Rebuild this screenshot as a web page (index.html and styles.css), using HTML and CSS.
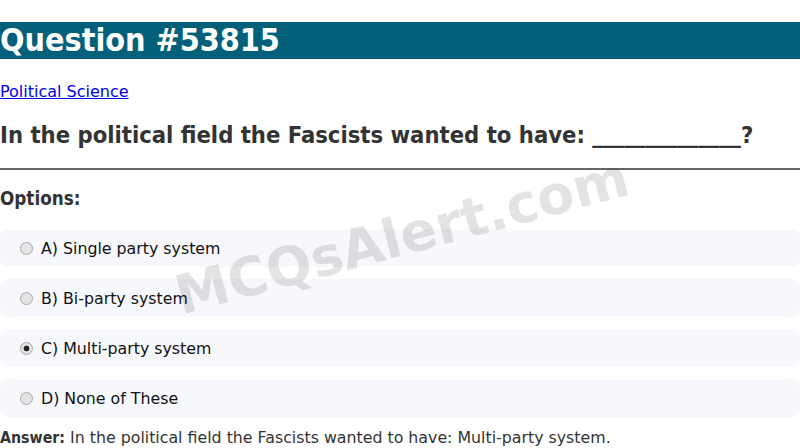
FILE: index.html
```
<!DOCTYPE html>
<html lang="en">
<head>
<meta charset="utf-8">
<title>Question #53815</title>
<link rel="stylesheet" href="styles.css">
</head>
<body>
<div class="page">
  <h1 class="title">Question #53815</h1>
  <p class="cat"><a href="#">Political Science</a></p>
  <h2 class="question">In the political field the Fascists wanted to have: ______________?</h2>
  <hr class="rule">
  <h3 class="opts-head">Options:</h3>
  <div class="options">
    <label class="option"><input type="radio" name="q" disabled><span>A) Single party system</span></label>
    <label class="option"><input type="radio" name="q" disabled><span>B) Bi-party system</span></label>
    <label class="option"><input type="radio" name="q" disabled checked><span>C) Multi-party system</span></label>
    <label class="option"><input type="radio" name="q" disabled><span>D) None of These</span></label>
  </div>
  <p class="answer"><strong>Answer:</strong> In the political field the Fascists wanted to have: Multi-party system.</p>
  <div class="watermark">MCQsAlert.com</div>
</div>
</body>
</html>
```
FILE: styles.css
```
html, body {
  margin: 0;
  padding: 0;
  background: #fff;
}
body {
  font-family: "DejaVu Sans", Verdana, sans-serif;
  color: #000;
}
.page {
  position: relative;
  overflow: hidden;
  height: 448px;
}
.title {
  font-family: "DejaVu Sans Condensed", "DejaVu Sans", sans-serif;
  font-stretch: condensed;
  font-size: 32px;
  margin: 22px 0 23px;
  background: #02607a;
  color: #fff;
  font-weight: bold;
  line-height: 37px;
}
.cat {
  font-size: 16px;
  line-height: 19px;
  margin: 0;
}
.cat a {
  color: #0000ee;
}
.question {
  font-family: "DejaVu Sans Condensed", "DejaVu Sans", sans-serif;
  font-stretch: condensed;
  font-size: 23.6px;
  line-height: 28px;
  color: #333;
  margin: 20px 0 19px;
  white-space: nowrap;
}
.rule {
  margin: 0;
  border: 0;
  border-top: 2px solid #666;
}
.opts-head {
  font-family: "DejaVu Sans Condensed", "DejaVu Sans", sans-serif;
  font-stretch: condensed;
  font-size: 18.72px;
  line-height: 22px;
  color: #333;
  margin: 18px 0 19px;
}
.options {
  display: flex;
  flex-direction: column;
  gap: 12px;
}
.option {
  display: flex;
  align-items: center;
  height: 38px;
  box-sizing: border-box;
  background: #f7f8fc;
  border-radius: 8px;
  padding: 0 15px;
  font-size: 15.8px;
  color: #111;
}
.option input {
  appearance: none;
  -webkit-appearance: none;
  width: 13px;
  height: 13px;
  margin: 0 8px 0 5px;
  border-radius: 50%;
  border: 1px solid #a9a9a9;
  background: #e4e4e4;
  box-sizing: border-box;
}
.option input:checked {
  background: radial-gradient(circle, #222 0, #222 2.6px, #e4e4e4 3.2px);
}
.answer {
  font-size: 15.8px;
  line-height: 19px;
  color: #333;
  margin: 11px 0 0;
}
.answer strong {
  font-family: "DejaVu Sans Condensed", "DejaVu Sans", sans-serif;
  font-stretch: condensed;
}
.watermark {
  position: absolute;
  left: 2px;
  width: 800px;
  top: 207px;
  text-align: center;
  line-height: 60px;
  font-size: 54px;
  font-weight: bold;
  color: rgba(0, 0, 0, 0.11);
  transform: rotate(-15deg);
  pointer-events: none;
  white-space: nowrap;
}
```
